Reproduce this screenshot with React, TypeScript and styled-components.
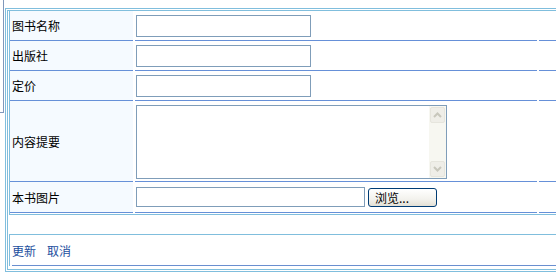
import React from "react";
import styled, { createGlobalStyle } from "styled-components";

const GlobalStyle = createGlobalStyle`
  html, body {
    margin: 0;
    padding: 0;
    background: #fff;
    overflow: hidden;
  }
  body {
    font-family: "Noto Sans CJK SC", "Liberation Sans", sans-serif;
    font-size: 12px;
    color: #000;
  }
`;

const Page = styled.div`
  display: flex;
  align-items: flex-start;
  width: 700px;
`;

const LeftStub = styled.div`
  width: 3px;
  height: 112px;
  border-right: 1px solid #8098bb;
  border-bottom: 1px solid #8098bb;
  flex: none;
`;

const OuterFrame = styled.div`
  margin: 8px 0 0 1px;
  width: 640px;
  border: 1px solid #80bedd;
  padding: 1px;
`;

const InnerFrame = styled.div`
  border: 1px solid #80bedd;
  padding: 0 0 3px 1px;
  display: flex;
  flex-direction: column;
`;

const FormBox = styled.div`
  border-left: 1px solid #80bedd;
  border-bottom: 1px solid #80bedd;
  padding-bottom: 1px;
  display: grid;
  grid-template-columns: 123px 402px 100px;
  column-gap: 2px;
`;

const Cell = styled.div<{ $h: number; $label?: boolean }>`
  height: ${(p) => p.$h - 1}px;
  border-bottom: 1px solid #6690d8;
  background: ${(p) => (p.$label ? "#f5faff" : "#fff")};
  display: flex;
  align-items: center;
  padding-left: ${(p) => (p.$label ? "2px" : "1px")};
`;

const TextInput = styled.input<{ $w: number; $h?: number }>`
  box-sizing: border-box;
  width: ${(p) => p.$w}px;
  height: ${(p) => p.$h ?? 22}px;
  border: 1px solid #7f9db9;
  margin: 0;
  padding: 0 2px;
  font: inherit;
  background: #fff;
  outline: none;
`;

const TextAreaBox = styled.div`
  box-sizing: border-box;
  width: 311px;
  height: 74px;
  margin-top: 1px;
  border: 1px solid #7f9db9;
  display: flex;
  background: #fff;
`;

const TextArea = styled.textarea`
  flex: 1;
  border: none;
  resize: none;
  outline: none;
  margin: 0;
  padding: 2px;
  font: inherit;
  overflow: hidden;
`;

const ScrollBar = styled.div`
  width: 17px;
  display: flex;
  flex-direction: column;
  background: #f7f7f1;
  padding-bottom: 1px;
`;

const ScrollButton = styled.div`
  box-sizing: border-box;
  height: 16px;
  margin: 1px 1px 0 1px;
  border: 1px solid #e6e5dd;
  border-radius: 2px;
  background: #efeee8;
  display: flex;
  align-items: center;
  justify-content: center;
`;

const Track = styled.div`
  flex: 1;
`;

const FileButton = styled.button`
  box-sizing: border-box;
  width: 69px;
  height: 19px;
  margin: 1px 0 0 3px;
  padding: 0 0 0 6px;
  border: 1px solid #003c74;
  border-radius: 3px;
  background: linear-gradient(#ffffff, #f3f2ed 60%, #e3e0d5);
  font: inherit;
  font-size: 12px;
  line-height: 15px;
  text-align: left;
  color: #000;
`;

const Spacer = styled.div`
  height: 19px;
`;

const ButtonBox = styled.div`
  border-top: 1px solid #80bedd;
  border-left: 1px solid #80bedd;
`;

const ButtonRow = styled.div`
  height: 30px;
  border-bottom: 1px solid #6a8fd0;
  margin-left: 2px;
  display: flex;
  align-items: center;
  gap: 11px;
`;

const Link = styled.a`
  color: #1c4e9e;
  text-decoration: none;
  cursor: pointer;
`;

const Arrow = ({ down }: { down?: boolean }) => (
  <svg width="9" height="6" viewBox="0 0 9 6">
    <polyline
      points={down ? "1,1 4.5,4.5 8,1" : "1,5 4.5,1.5 8,5"}
      fill="none"
      stroke="#c8c7bc"
      strokeWidth="2"
    />
  </svg>
);

const rows = [
  { label: "图书名称", h: 30 },
  { label: "出版社", h: 30 },
  { label: "定价", h: 30 },
  { label: "内容提要", h: 81 },
  { label: "本书图片", h: 31 },
];

const App = () => {
  const renderField = (i: number) => {
    if (i === 3) {
      return (
        <TextAreaBox>
          <TextArea />
          <ScrollBar>
            <ScrollButton>
              <Arrow />
            </ScrollButton>
            <Track />
            <ScrollButton>
              <Arrow down />
            </ScrollButton>
          </ScrollBar>
        </TextAreaBox>
      );
    }
    if (i === 4) {
      return (
        <>
          <TextInput $w={229} $h={20} readOnly />
          <FileButton>浏览...</FileButton>
        </>
      );
    }
    return <TextInput $w={175} />;
  };

  return (
    <Page>
      <GlobalStyle />
      <LeftStub />
      <OuterFrame>
        <InnerFrame>
          <FormBox>
            {rows.map((r, i) => (
              <React.Fragment key={r.label}>
                <Cell $h={r.h} $label>
                  {r.label}
                </Cell>
                <Cell $h={r.h}>{renderField(i)}</Cell>
                <Cell $h={r.h} />
              </React.Fragment>
            ))}
          </FormBox>
          <Spacer />
          <ButtonBox>
            <ButtonRow>
              <Link>更新</Link>
              <Link>取消</Link>
            </ButtonRow>
          </ButtonBox>
        </InnerFrame>
      </OuterFrame>
    </Page>
  );
};

export default App;
